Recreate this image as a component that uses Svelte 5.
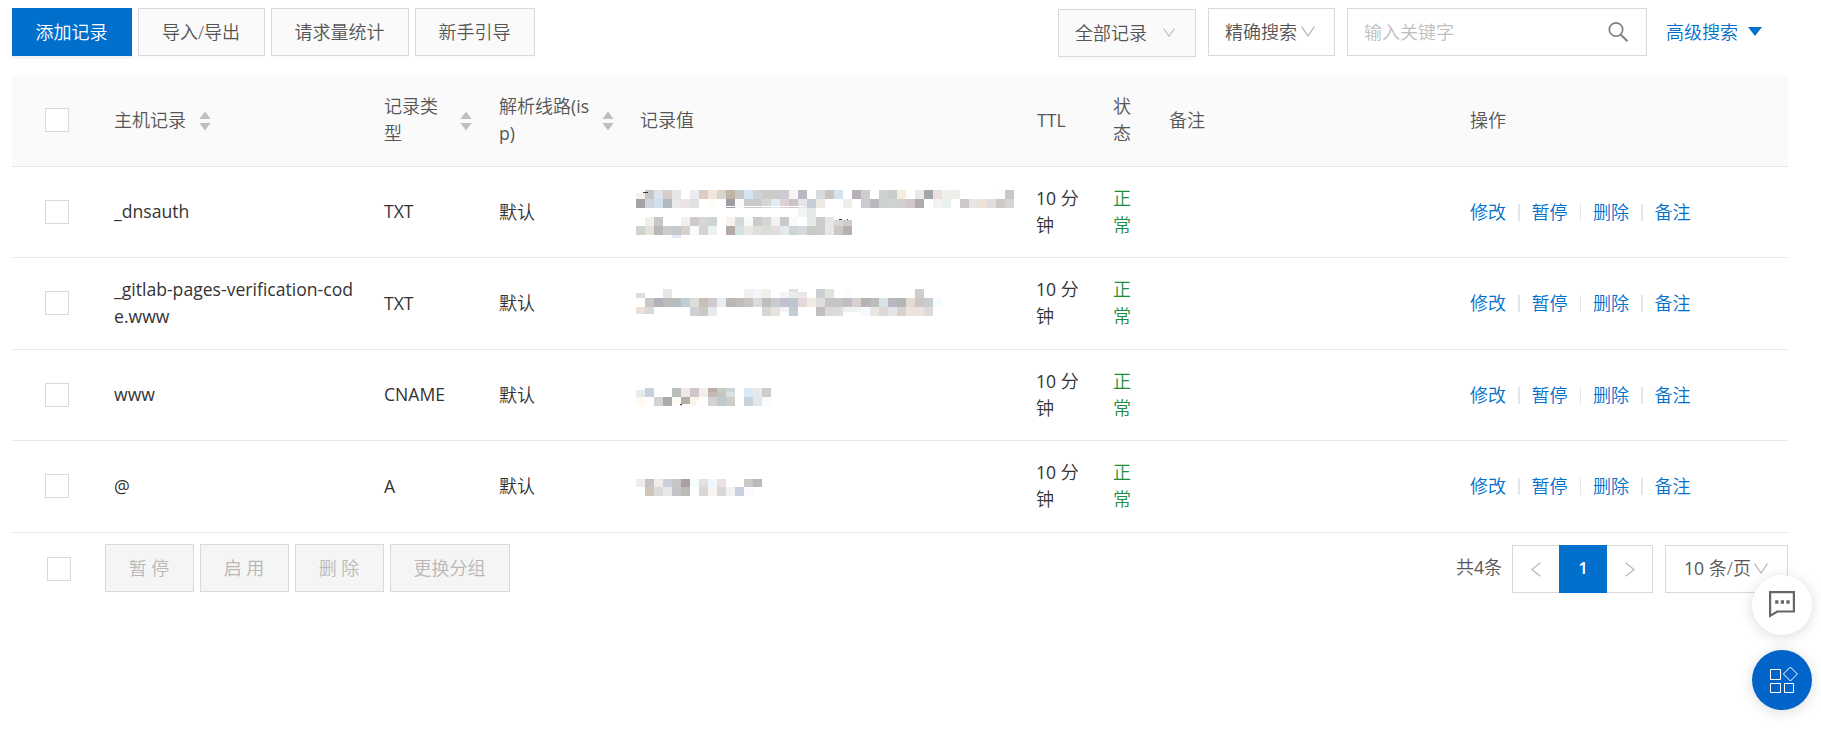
<script>
  const CELL = 9;

  // Each strip: vertical offset, colours of consecutive cells ('-' leaves a gap), height, first column
  const strip = (y, text, h = CELL, from = 0) =>
    text.split(' ').map((c, i) => ({ x: (i + from) * CELL, y, h, c })).filter((d) => d.c !== '-').map((d) => ({ ...d, c: '#' + d.c }));

  const maskA = [
    ...strip(5, 'f5f2ee c6c6c6 dde1ea d8ccc8 e6e6e6 - e9edf2 decbc1 f0e6dc d8d5d0 c0b2a4 c6c8c7 d3e4f4 ced4d4 cbcbca cacbc9 cccad5 f7f4f6 bab8c5 - d4dadd ccc4ba d3e1f0 - b8b0b8 cdccd1 - ccd2d1 c8ccc8 f7ecde fdfefd e8e9e9 a1a7ab eae0dd f0efee f0eee8 - - - - fdfdfd c4cacc'),
    ...strip(14, 'a4a4a8 d0d4dd d2dfed b3b9c1 eae8ea eee2e4 e0e0e1 - fffdf7 - 9c9ca2 fafafa c9cac9 cacac9 d6d7d5 e0edf7 e0cfd0 cbc3c6 e6e4e6 c4ccd5 ece9e1 - - f1ece9 - cccbd2 bab9c0 ccd1d0 d0d3d0 cfd1cf d2c6ca acaca9 - f3f3f1 e7eff0 - ccc8c9 e8e5e8 ede2d7 dfdfe2 cfc8c6 d6d5d1'),
    ...strip(23, 'f2f5f5 e4e8e9', 9, 18),
    ...strip(32, '- f2efeb c5c7c9 - - eef1f1 cec9cb d8d6d6 cfd5d5 - f8f3ef d5d9d7 f9fafa cccacd d5d5d4 f2f2f2 cacacc fafafa - e6eaeb cbcccc e6e6e8 - -'),
    ...strip(35, 'd5d7d9 cdcdcd', 6, 22),
    ...strip(41, 'ced5ce e4e3db b8b8b7 c9cdcf c5c7ca d9cfcc f9faff d7d3d2 ecf1f1 - b4aba7 d4e2e3 e8e8e7 dedfda dbdcda e5dcdc e4eaed ced4d4 d3d9dc cacac4 cecacb e7e6e9 cbc8c1 bab0b4'),
    ...strip(50, 'e3eaf6', 3, 4),
    { x: 0, y: 5, w: 9, h: 3, c: '#fff' },
    { x: 7, y: 7, w: 5, h: 1, c: '#3a3a3a' },
    { x: 203, y: 34, w: 3, h: 1, c: '#3a3a3a' },
    { x: 211, y: 34, w: 1, h: 1, c: '#4a4a4a' },
    { x: 90, y: 21, w: 78, h: 1, c: '#fff' }
  ];
  const maskB = [
    ...strip(17, 'deded9', 5),
    ...strip(13, 'e5e6e6 - - - - - - - - f0f0f0 f5f6fb efefeb - - dcdee2 - - cbced2 e4e4df - f8fdfe - - - - - - - cdcdcc', 9, 3),
    ...strip(16, 'f4f4f3 ebebec ebe5e6', 6, 16),
    ...strip(22, '- cbc7c3 b1b1bb bbbcb9 b9bcbc bdced9 dedbd8 c5c0b0 cfcace e6eef3 bcb7b6 c1bbb9 c4c5c0 d9dce1 bfbfbe c8cacb c0c3cf bfc5ce e4d8da efece3 dededc c5c5c5 c4c5c5 bfbec4 d8d0d0 b8b2b0 bcbcba dae2e6 b9b7c0 b5b7b7 e3dad1 ccc6c2 c7cccf f3feff'),
    ...strip(31, 'ecdfd5 d9d9d9', 6.5),
    ...strip(31, 'ced1d4 c9cac4 e8ebee - - - - - dad7d3 e7e2de - c3cbd3 - - c3bdbb d9d9da dcdcdd - - f5faff eae7e3 ded8d7 e4e5e8 d9d1cb ebe3de ece2de dfdad8', 9, 6),
    ...strip(31, 'f3f3f3', 5, 16),
    ...strip(31, 'f1f1f1 f1f1f1', 5, 23)
  ];
  const maskC = [
    ...strip(20, 'e6eae9 c9cfdf - - babfbd f0e9e6 cec6cb f3eeee bdaba5 c4ccc5 cad5da - d6e9f5 e8e8e6 cecdcc'),
    ...strip(24, 'c3b9b5 c5c6bc d9e2e3', 5, 8),
    ...strip(29, 'fff9f2 - d3d3d3 a7abac fffcf8 b4aea9 faf3ec - d5d1d3 becad2 cfcdca - cad2da e3e6ea f9fbff'),
    { x: 44, y: 36, w: 2, h: 1, c: '#3f3f50' },
    { x: 0, y: 20, w: 9, h: 2, c: '#fff' },
    { x: 46, y: 36, w: 10, h: 2, c: '#fff' },
    { x: 60, y: 33, w: 5, h: 5, c: '#fff' }
  ];
  const maskD = [
    ...strip(20, 'f1ece8 c3c2c8 f2ece8 cad0df c7c7c5 aba0a4 f3ffff e4e0df edf9ff e8e3e1 - fffffb c9cac8 b8bcbf', 8),
    ...strip(28, '- cec4ba dadad7 e7e7e7 c3c2c7 bdb9b5 - d6d7d8 f8f5f3 dbd7d4 f2f2f2 c8cfde f9fbff')
  ];

  const records = [
    { host: '_dnsauth', type: 'TXT', mask: maskA },
    { host: '_gitlab-pages-verification-code.www', type: 'TXT', mask: maskB },
    { host: 'www', type: 'CNAME', mask: maskC },
    { host: '@', type: 'A', mask: maskD }
  ];
  const actions = ['修改', '暂停', '删除', '备注'];
</script>

{#snippet sorter()}
  <svg class="sorter" width="12" height="20" viewBox="0 0 12 20" fill="#bfbfbf">
    <path d="M6 0.5 11.6 8H.4z" /><path d="M6 19.5 11.6 12H.4z" />
  </svg>
{/snippet}

{#snippet chevron(w, h)}
  <svg class="chevron" width={w} height={h} viewBox="0 0 14 11" preserveAspectRatio="none" fill="none" stroke="#b8b8b8" stroke-width="1.3">
    <path d="M.6.6 7 10 13.4.6" />
  </svg>
{/snippet}

<main>
  <header class="toolbar">
    <div class="left">
      <button class="btn primary">添加记录</button>
      <button class="btn w127">导入/导出</button>
      <button class="btn w138">请求量统计</button>
      <button class="btn">新手引导</button>
    </div>
    <div class="right">
      <div class="btn filter">全部记录{@render chevron(12, 9)}</div>
      <div class="select mode">精确搜索{@render chevron(14, 11)}</div>
      <div class="search">
        <span>输入关键字</span>
        <svg width="22" height="22" viewBox="0 0 22 22" fill="none" stroke="#808080" stroke-width="1.7">
          <circle cx="9" cy="8.5" r="6.7" /><path d="M13.6 13.5 20.5 20.3" stroke-width="2" />
        </svg>
      </div>
      <div class="advanced">高级搜索<svg width="14" height="9" viewBox="0 0 14 9" fill="#0070cc"><path d="M0 0h14L7 9z" /></svg></div>
    </div>
  </header>

  <section class="table">
    <div class="row head">
      <div class="check"><i class="box"></i></div>
      <div class="cell">主机记录{@render sorter()}</div>
      <div class="cell tight"><span class="t-type">记录类型</span>{@render sorter()}</div>
      <div class="cell"><span class="t-isp">解析线路<span class="lat">(is</span><br /><span class="lat">p)</span></span>{@render sorter()}</div>
      <div class="cell tight">记录值</div>
      <div class="cell"><span class="lat">TTL</span></div>
      <div class="cell"><span class="one">状态</span></div>
      <div class="cell tight">备注</div>
      <div class="cell">操作</div>
    </div>
    {#each records as r}
      <div class="row">
        <div class="check"><i class="box"></i></div>
        <div class="cell latin"><span class="host">{r.host}</span></div>
        <div class="cell tight type">{r.type}</div>
        <div class="cell">默认</div>
        <div class="cell">
          <svg class="mask" width="380" height="54" viewBox="0 0 380 54" shape-rendering="crispEdges">
            {#each r.mask as m}
              <rect x={m.x} y={m.y} width={m.w ?? CELL} height={m.h} fill={m.c} />
            {/each}
          </svg>
        </div>
        <div class="cell tight"><span class="ttl"><span class="lat">10</span> 分<br />钟</span></div>
        <div class="cell ok"><span class="one">正常</span></div>
        <div class="cell"></div>
        <div class="cell ops">
          {#each actions as a}<a>{a}</a>{/each}
        </div>
      </div>
    {/each}
  </section>

  <footer>
    <i class="box"></i>
    <div class="batch">
      <button class="btn off">暂 停</button>
      <button class="btn off">启 用</button>
      <button class="btn off">删 除</button>
      <button class="btn off wide">更换分组</button>
    </div>
    <div class="pager">
      <span class="total">共<span class="lat">4</span>条</span>
      <div class="pages">
        <span class="arrow"><svg width="10" height="15" viewBox="0 0 10 15" fill="none" stroke="#b8b8b8" stroke-width="1.3"><path d="M9.4.8.9 7.5l8.5 6.7" /></svg></span>
        <b>1</b>
        <span class="arrow next"><svg width="10" height="15" viewBox="0 0 10 15" fill="none" stroke="#b8b8b8" stroke-width="1.3"><path d="M.6.8l8.5 6.7-8.5 6.7" /></svg></span>
      </div>
      <div class="select size"><span><span class="lat">10</span> 条/页</span>{@render chevron(14, 11)}</div>
    </div>
  </footer>

  <aside>
    <div class="fab chat">
      <svg width="28" height="28" viewBox="0 0 28 28" fill="none" stroke="#666" stroke-width="2.2">
        <path d="M2.1 2.1h23.8v19.4H9.3l-7.2 4.4z" />
        <path d="M7.2 12h3.2M12.8 12H16M18.4 12h3.2" stroke-width="3.4" />
      </svg>
    </div>
    <div class="fab apps">
      <svg width="28" height="28" viewBox="0 0 28 28" fill="none" stroke="#fff" stroke-width="1">
        <path d="M.5 3.5h10v10H.5zM.5 17.5h10v9H.5zM14.5 17.5h9v9h-9zM20.4 1l7 7-7 7-7-7z" />
      </svg>
    </div>
  </aside>
</main>

<style>
  :global(body) { background: #fff; }
  main {
    position: relative;
    box-sizing: border-box;
    width: 1821px;
    height: 729px;
    padding: 8px 33px 0 12px;
    overflow: hidden;
    font: 350 18px/27px 'Open Sans', 'Noto Sans CJK SC', sans-serif;
    color: #333;
  }
  main * { box-sizing: border-box; }
  .toolbar { display: flex; justify-content: space-between; height: 67px; align-items: flex-start; color: #555; }
  .left, .batch { display: flex; gap: 6px; }
  .btn {
    width: 120px;
    height: 48px;
    padding: 0 1px 0 0;
    border: 1px solid #d9d9d9;
    background: #fafafa;
    box-shadow: 0 3px 0 rgba(0, 0, 0, 0.016);
    font: inherit;
    color: #555;
    white-space: nowrap;
  }
  .primary { background: #0070cc; border-color: #0070cc; color: #fff; box-shadow: 0 3px 0 rgba(0, 0, 0, 0.045); }
  .w127 { width: 127px; }
  .w138 { width: 138px; }
  .right { display: flex; align-items: flex-start; width: 730px; }
  .filter { display: flex; align-items: center; justify-content: space-between; width: 138px; margin: 1px 12px 0 0; padding: 0 20px 0 16px; }
  .filter .chevron { margin-top: -2px; }
  .select { display: flex; align-items: center; height: 48px; border: 1px solid #d9d9d9; background: #fff; }
  .mode { width: 127px; padding-left: 16px; gap: 4px; margin-right: 12px; }
  .mode .chevron { margin-top: -1px; }
  .search { display: flex; align-items: center; justify-content: space-between; width: 300px; height: 48px; padding: 0 17px 0 16px; border: 1px solid #d9d9d9; color: #bfbfbf; }
  .advanced { display: flex; align-items: center; gap: 10px; height: 48px; margin-left: 19px; color: #0070cc; white-space: nowrap; }
  .advanced svg { margin-top: -1px; }

  .row { display: grid; grid-template-columns: 84px 271px 114px 142px 396px 76px 57px 300px 336px; height: 91px; border-bottom: 1px solid #e5e8ed; }
  .row:nth-child(odd) { height: 92px; }
  .head { background: #fafafa; color: #555; border-color: #e1eaf0; }
  .check { display: flex; align-items: center; padding-left: 33px; }
  .row:nth-child(odd) .check { padding-bottom: 1px; }
  .box { flex: none; width: 24px; height: 24px; border: 1px solid #d9d9d9; background: #fff; }
  .cell { display: flex; align-items: center; padding-left: 18px; min-width: 0; }
  .tight { padding-left: 17px; }
  .lat, .latin, .type { font-size: 17.6px; font-weight: 400; }
  .sorter { flex: none; margin-left: 13px; }
  .t-type { width: 63px; word-break: break-all; }
  .t-isp { width: 92px; white-space: nowrap; }
  .t-isp + .sorter { margin-left: 11px; }
  .one { width: 19px; word-break: break-all; }
  .host { width: 244px; word-break: break-all; }
  .latin, .type { padding-bottom: 1px; }
  .ttl { width: 50px; white-space: nowrap; }
  .mask { flex: none; margin-left: -5px; }
  .row:nth-child(odd) :is(.mask, .ttl, .one, .t-type, .t-isp) { margin-bottom: 1px; }
  .ok { color: #1e8e3e; }
  .ops { color: #0070cc; }
  .ops a + a { display: flex; align-items: center; }
  .ops a + a::before { content: ''; width: 1.5px; height: 17px; margin: 0 12px; background: #e3e7ec; }

  footer { display: flex; align-items: flex-start; padding: 11px 0 0 35px; }
  footer > .box { margin-top: 13px; }
  .batch { margin-left: 34px; }
  .off { width: 89px; background: #f5f5f5; color: #b8b8b8; box-shadow: none; }
  .wide { width: 120px; }
  .pager { display: flex; align-items: flex-start; margin: 1px 0 0 auto; color: #555; }
  .total { margin: 9px 10px 0 0; }
  .pages { display: flex; height: 48px; margin-right: 12px; }
  .arrow { display: flex; align-items: center; justify-content: center; width: 47px; border: 1px solid #d9d9d9; border-right: 0; }
  .next { width: 46px; border-right: 1px solid #d9d9d9; border-left: 0; }
  .pages b { width: 48px; background: #0070cc; color: #fff; text-align: center; font: 600 17px/45px 'Open Sans', sans-serif; }
  .size { width: 123px; padding: 0 0 1px 18px; gap: 3px; white-space: nowrap; }

  aside { position: absolute; top: 575px; left: 1752px; display: grid; gap: 15px; }
  .fab { display: flex; align-items: center; justify-content: center; width: 60px; height: 60px; border-radius: 50%; box-shadow: 0 2px 14px rgba(0, 0, 0, 0.14); }
  .chat { background: #fff; padding: 0 1px 2px 0; }
  .apps { background: #0064c8; padding-left: 3px; }
</style>
